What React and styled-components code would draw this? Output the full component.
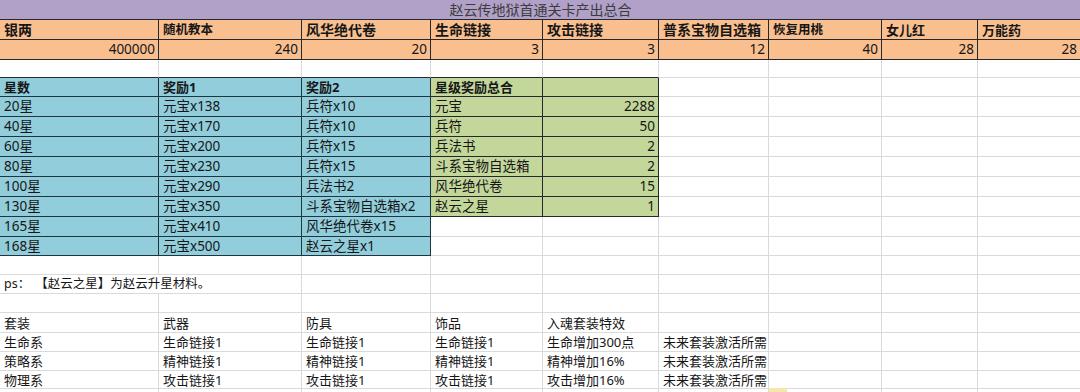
import React from "react";
import styled, { createGlobalStyle } from "styled-components";

const Global = createGlobalStyle`
  html, body { margin: 0; padding: 0; background: #fff; overflow: hidden; }
  body { font-family: "Noto Sans", "Noto Sans CJK SC", sans-serif; }
`;

const COLS = [159, 143, 129, 112, 116, 110, 113, 96, 103];
const ROWS = [20, 20, 20, 18, 19, 20, 20, 20, 20, 20, 20, 20, 19, 19, 19, 19, 20, 19, 19, 18, 20];

const FILL = {
  title: "#b1a0c7",
  orange: "#fabf8f",
  blue: "#92cddc",
  green: "#c4d79b",
  none: "#ffffff",
};
const GRID = "#dadada";
const DARK = "#26292b";
const BLUE_LINE = "#1f3640";

const Sheet = styled.div`
  display: grid;
  grid-template-columns: ${COLS.map((c) => c + "px").join(" ")};
  grid-template-rows: ${ROWS.map((r) => r + "px").join(" ")};
  width: ${COLS.reduce((a, b) => a + b, 0)}px;
`;

const Cell = styled.div`
  box-sizing: border-box;
  position: relative;
  display: flex;
  align-items: center;
  justify-content: ${(p) => (p.$align === "right" ? "flex-end" : p.$align === "center" ? "center" : "flex-start")};
  grid-column: ${(p) => (p.$span ? `span ${p.$span}` : "auto")};
  background: ${(p) => FILL[p.$fill || "none"]};
  border-right: 1px solid ${(p) => p.$r || GRID};
  border-bottom: 1px solid ${(p) => p.$b || GRID};
  padding: 1px 3px 0 4px;
  font-size: ${(p) => p.$size || 13}px;
  font-weight: ${(p) => (p.$bold ? 700 : 400)};
  color: ${(p) => p.$color || "#161616"};
  white-space: nowrap;
  overflow: visible;
  line-height: 1;
`;

const TitleCell = styled(Cell)`
  grid-column: 1 / -1;
  justify-content: center;
  border-right: none;
  padding-left: 0;
  padding-right: 0;
  font-size: 14px;
  color: #3c3c3c;
`;

const Gap = styled.span`
  display: inline-block;
  width: 5px;
`;

const SelMark = styled.span`
  position: absolute;
  left: 0;
  top: -1px;
  width: 18px;
  height: 4px;
  background: #f6e6a8;
`;

const headers = [
  ["银两", 14],
  ["随机教本", 12.5],
  ["风华绝代卷", 14],
  ["生命链接", 14],
  ["攻击链接", 14],
  ["普系宝物自选箱", 14],
  ["恢复用桃", 12.5],
  ["女儿红", 13],
  ["万能药", 13],
];
const values = ["400000", "240", "20", "3", "3", "12", "40", "28", "28"];

const stars = [
  ["20星", "元宝x138", "兵符x10"],
  ["40星", "元宝x170", "兵符x10"],
  ["60星", "元宝x200", "兵符x15"],
  ["80星", "元宝x230", "兵符x15"],
  ["100星", "元宝x290", "兵法书2"],
  ["130星", "元宝x350", "斗系宝物自选箱x2"],
  ["165星", "元宝x410", "风华绝代卷x15"],
  ["168星", "元宝x500", "赵云之星x1"],
];
const totals = [
  ["元宝", "2288"],
  ["兵符", "50"],
  ["兵法书", "2"],
  ["斗系宝物自选箱", "2"],
  ["风华绝代卷", "15"],
  ["赵云之星", "1"],
];

const suits = [
  ["套装", "武器", "防具", "饰品", "入魂套装特效", ""],
  ["生命系", "生命链接1", "生命链接1", "生命链接1", "生命增加300点", "未来套装激活所需"],
  ["策略系", "精神链接1", "精神链接1", "精神链接1", "精神增加16%", "未来套装激活所需"],
  ["物理系", "攻击链接1", "攻击链接1", "攻击链接1", "攻击增加16%", "未来套装激活所需"],
];

export default function App() {
  const rows = [];

  rows.push(
    <TitleCell key="title" $fill="title" $b={DARK}>
      赵云传地狱首通关卡产出总合
    </TitleCell>
  );

  headers.forEach(([h, s], i) =>
    rows.push(
      <Cell key={"h" + i} $fill="orange" $bold $size={s} $r={DARK} $b={DARK}>
        {h}
      </Cell>
    )
  );
  values.forEach((v, i) =>
    rows.push(
      <Cell key={"v" + i} $fill="orange" $align="right" $size={13.5} $r={DARK} $b={DARK}>
        {v}
      </Cell>
    )
  );

  for (let i = 0; i < 9; i++) {
    rows.push(<Cell key={"e1" + i} $b={i < 5 ? DARK : GRID} />);
  }

  rows.push(
    <Cell key="sh0" $fill="blue" $bold $r={BLUE_LINE} $b={BLUE_LINE}>星数</Cell>,
    <Cell key="sh1" $fill="blue" $bold $r={BLUE_LINE} $b={BLUE_LINE}>奖励1</Cell>,
    <Cell key="sh2" $fill="blue" $bold $r={BLUE_LINE} $b={BLUE_LINE}>奖励2</Cell>,
    <Cell key="sh3" $fill="green" $bold $r={DARK} $b={DARK}>星级奖励总合</Cell>,
    <Cell key="sh4" $fill="green" $r={DARK} $b={DARK} />
  );
  for (let i = 0; i < 4; i++) rows.push(<Cell key={"shb" + i} />);

  stars.forEach((s, ri) => {
    s.forEach((t, ci) =>
      rows.push(
        <Cell key={`s${ri}-${ci}`} $fill="blue" $size={13.5} $r={BLUE_LINE} $b={BLUE_LINE}>
          {t}
        </Cell>
      )
    );
    const tot = totals[ri];
    if (tot) {
      rows.push(
        <Cell key={`t${ri}a`} $fill="green" $size={13.5} $r={DARK} $b={DARK}>{tot[0]}</Cell>,
        <Cell key={`t${ri}b`} $fill="green" $size={13.5} $align="right" $r={DARK} $b={DARK}>{tot[1]}</Cell>
      );
    } else {
      rows.push(<Cell key={`t${ri}a`} />, <Cell key={`t${ri}b`} />);
    }
    for (let i = 0; i < 4; i++) rows.push(<Cell key={`sb${ri}-${i}`} />);
  });

  for (let i = 0; i < 9; i++) rows.push(<Cell key={"e2" + i} />);
  rows.push(
    <Cell key="ps" $span={2} $size={12.5}>
      ps：<Gap />【赵云之星】为赵云升星材料。
    </Cell>
  );
  for (let i = 0; i < 7; i++) rows.push(<Cell key={"psb" + i} />);
  for (let i = 0; i < 9; i++) rows.push(<Cell key={"e3" + i} />);

  suits.forEach((r, ri) => {
    r.forEach((t, ci) =>
      rows.push(
        <Cell key={`u${ri}-${ci}`} $size={13}>
          {t}
        </Cell>
      )
    );
    for (let i = 0; i < 3; i++) rows.push(<Cell key={`ub${ri}-${i}`} />);
  });

  for (let i = 0; i < 9; i++)
    rows.push(<Cell key={"e4" + i}>{i === 6 ? <SelMark /> : null}</Cell>);

  return (
    <>
      <Global />
      <Sheet>{rows}</Sheet>
    </>
  );
}
